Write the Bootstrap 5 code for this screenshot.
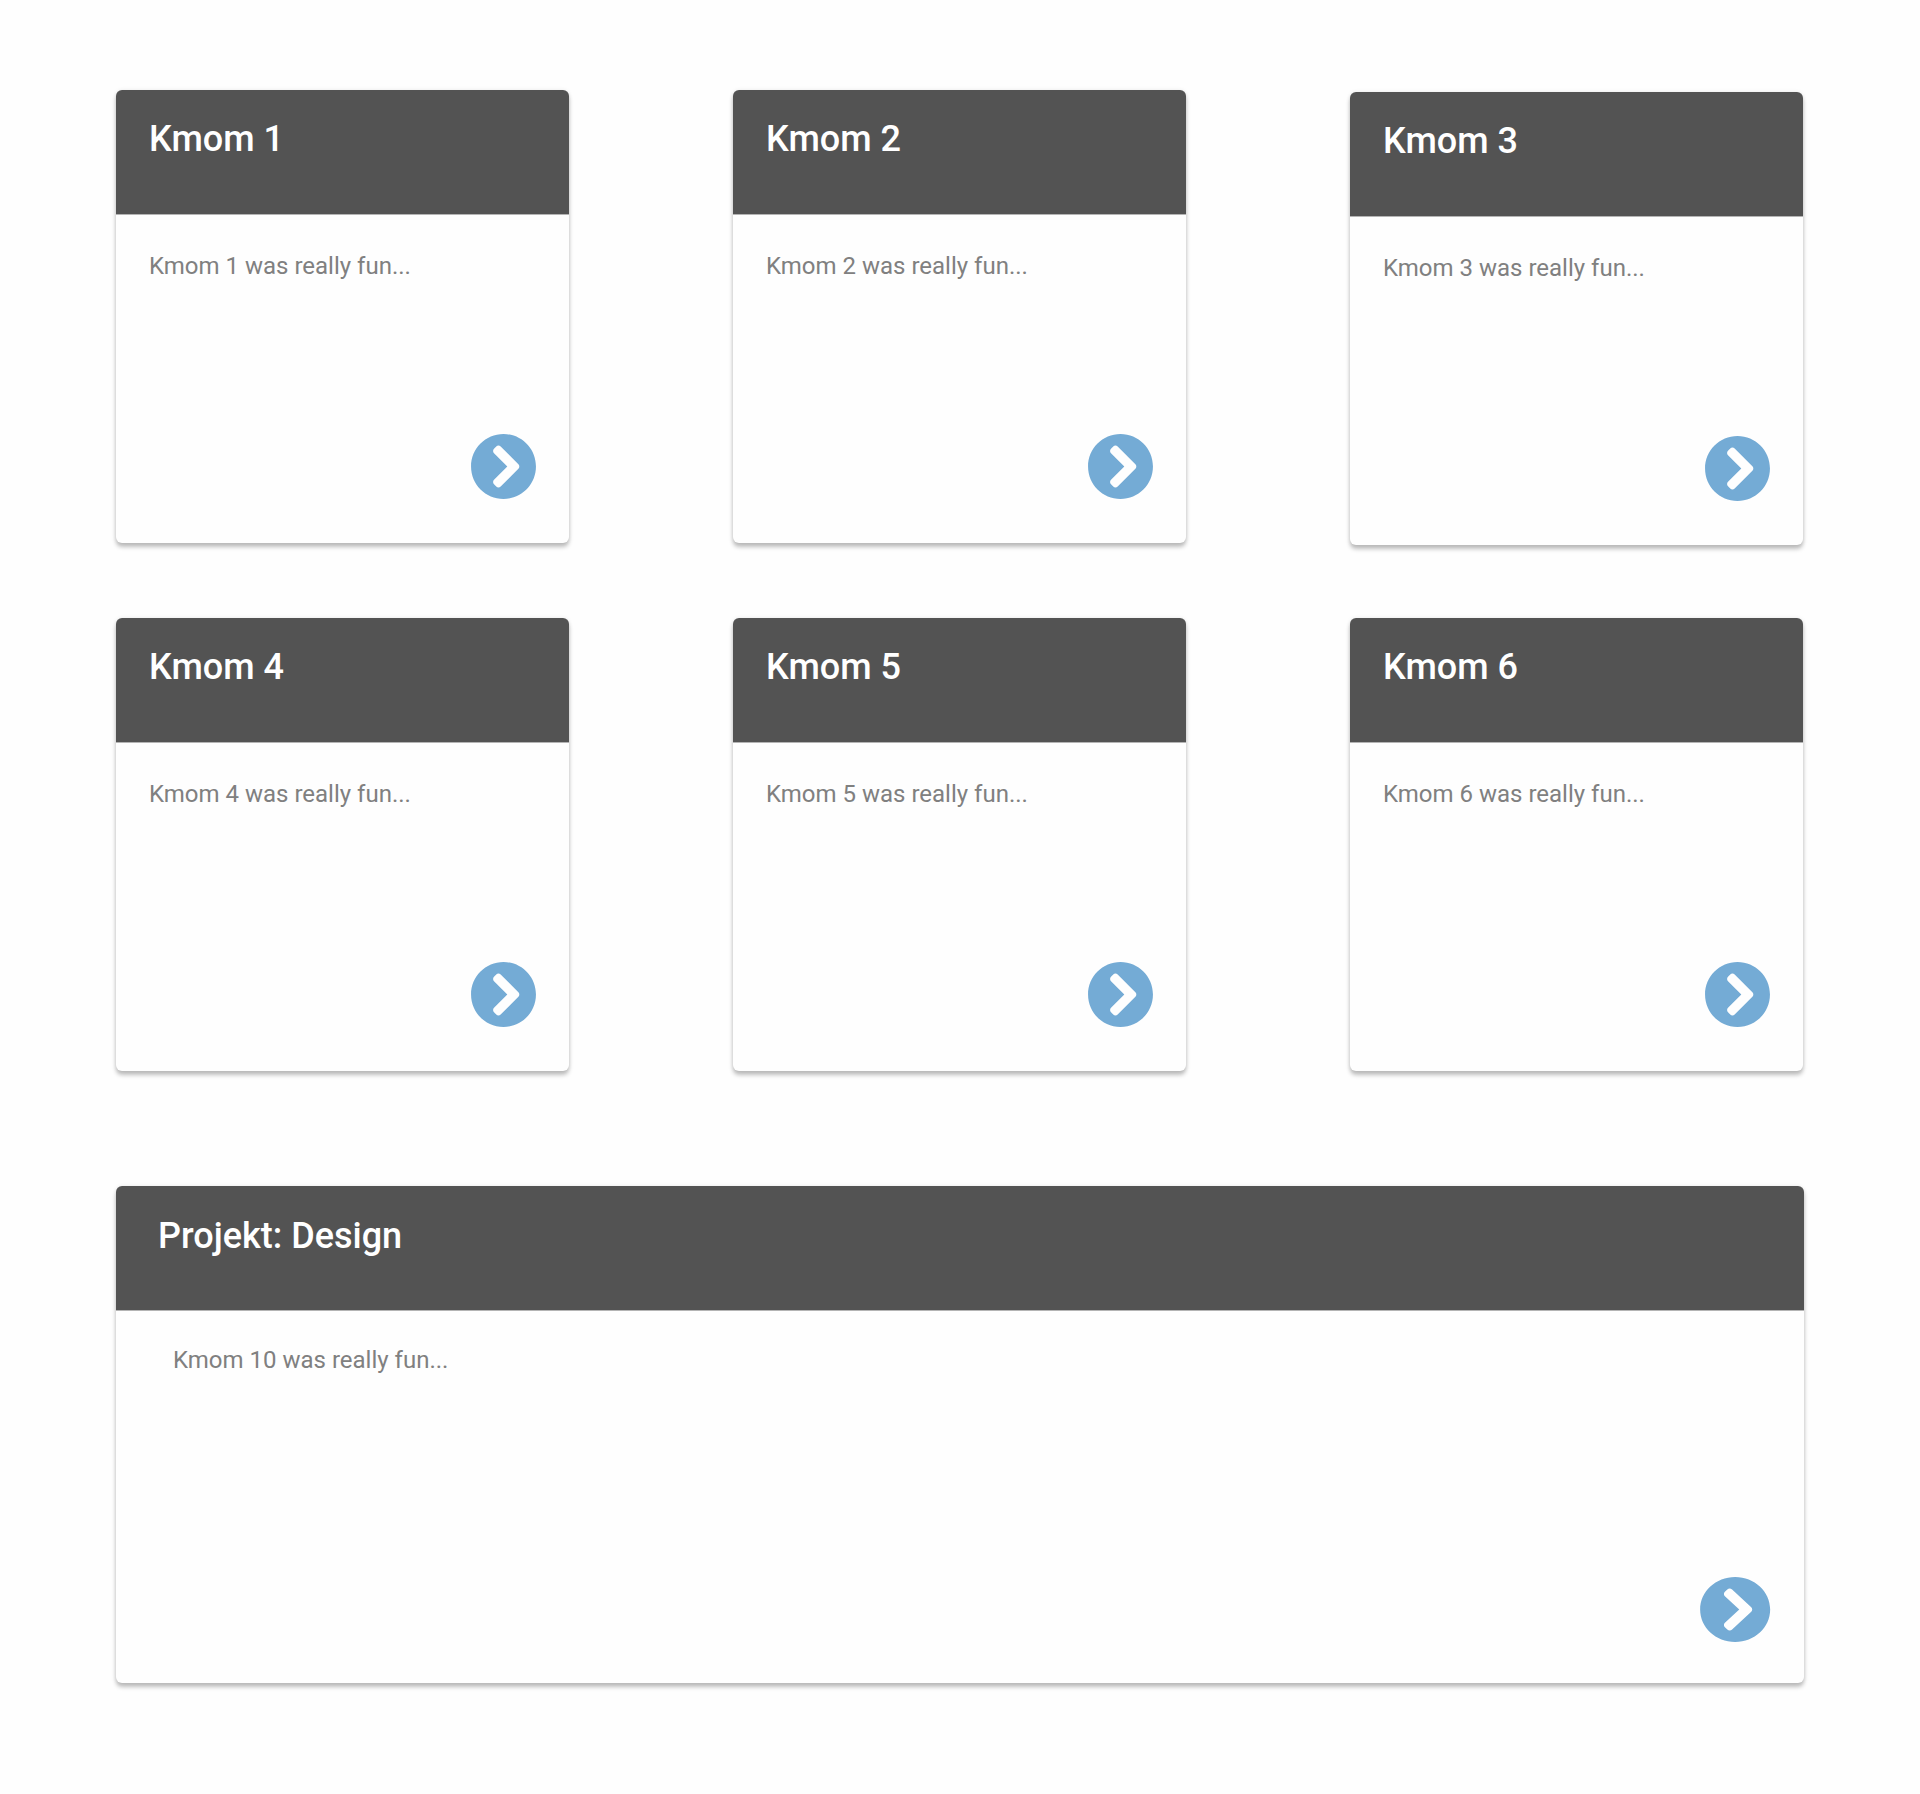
<!DOCTYPE html>
<html lang="sv">
<head>
<meta charset="utf-8">
<meta name="viewport" content="width=device-width, initial-scale=1">
<title>Kmom</title>
<link href="https://cdn.jsdelivr.net/npm/bootstrap@5.3.0/dist/css/bootstrap.min.css" rel="stylesheet">
<style>
body{font-family:Roboto,"Liberation Sans",sans-serif;background:#fefefe;color:#808080}
.board{padding:90px 116px 109px}
.tiles{display:grid;grid-template-columns:repeat(3,453px);column-gap:164px;row-gap:75px;margin-bottom:115px}
.report{height:453px;border:0;border-radius:6px;background:#fefefe;color:inherit;box-shadow:0 4px 4px rgba(0,0,0,.25),0 0 4px rgba(0,0,0,.08)}
.report-wide{height:497px}
.report .card-header{height:125px;padding:28px 33px 0;background:#535353;border-bottom:1px solid #b4b4b4;border-radius:6px 6px 0 0}
.report .card-title{font-size:36px;line-height:42px;font-weight:500;color:#fff}
.report .card-body{padding:36px 32.5px 43.5px 33px}
.report .card-text{font-size:24px;line-height:30px}
.report-wide .card-header{padding-top:29px;padding-left:42px}
.report-wide .card-body{padding:34px 33px 40px 57px}
.lowered{margin-top:2px;margin-bottom:-2px}
.go{line-height:0;color:#74abd5}
.go svg{width:67px;height:67px}
.report-wide .go svg{width:72.3px;height:67px}
</style>
</head>
<body>
<svg class="d-none" aria-hidden="true"><symbol id="chevron" viewBox="0 0 512 512" preserveAspectRatio="none"><path fill="currentColor" d="M256 8c137 0 248 111 248 248S393 504 256 504 8 393 8 256 119 8 256 8zm113.9 231L234.4 103.5c-9.4-9.4-24.6-9.4-33.9 0l-17 17c-9.4 9.4-9.4 24.6 0 33.9L285.1 256 183.5 357.6c-9.4 9.4-9.4 24.6 0 33.9l17 17c9.4 9.4 24.6 9.4 33.9 0L369.9 273c9.4-9.4 9.4-24.6 0-34z"/></symbol></svg>
<main class="board">
  <div class="tiles">
    <article class="card report"><div class="card-header"><h2 class="card-title m-0">Kmom 1</h2></div><div class="card-body d-flex flex-column justify-content-between"><p class="card-text m-0">Kmom 1 was really fun...</p><a class="go align-self-end" href="#"><svg><use href="#chevron"/></svg></a></div></article>
    <article class="card report"><div class="card-header"><h2 class="card-title m-0">Kmom 2</h2></div><div class="card-body d-flex flex-column justify-content-between"><p class="card-text m-0">Kmom 2 was really fun...</p><a class="go align-self-end" href="#"><svg><use href="#chevron"/></svg></a></div></article>
    <article class="card report lowered"><div class="card-header"><h2 class="card-title m-0">Kmom 3</h2></div><div class="card-body d-flex flex-column justify-content-between"><p class="card-text m-0">Kmom 3 was really fun...</p><a class="go align-self-end" href="#"><svg><use href="#chevron"/></svg></a></div></article>
    <article class="card report"><div class="card-header"><h2 class="card-title m-0">Kmom 4</h2></div><div class="card-body d-flex flex-column justify-content-between"><p class="card-text m-0">Kmom 4 was really fun...</p><a class="go align-self-end" href="#"><svg><use href="#chevron"/></svg></a></div></article>
    <article class="card report"><div class="card-header"><h2 class="card-title m-0">Kmom 5</h2></div><div class="card-body d-flex flex-column justify-content-between"><p class="card-text m-0">Kmom 5 was really fun...</p><a class="go align-self-end" href="#"><svg><use href="#chevron"/></svg></a></div></article>
    <article class="card report"><div class="card-header"><h2 class="card-title m-0">Kmom 6</h2></div><div class="card-body d-flex flex-column justify-content-between"><p class="card-text m-0">Kmom 6 was really fun...</p><a class="go align-self-end" href="#"><svg><use href="#chevron"/></svg></a></div></article>
  </div>
  <article class="card report report-wide"><div class="card-header"><h2 class="card-title m-0">Projekt: Design</h2></div><div class="card-body d-flex flex-column justify-content-between"><p class="card-text m-0">Kmom 10 was really fun...</p><a class="go align-self-end" href="#"><svg><use href="#chevron"/></svg></a></div></article>
</main>
<script src="https://cdn.jsdelivr.net/npm/bootstrap@5.3.0/dist/js/bootstrap.bundle.min.js"></script>
</body>
</html>
